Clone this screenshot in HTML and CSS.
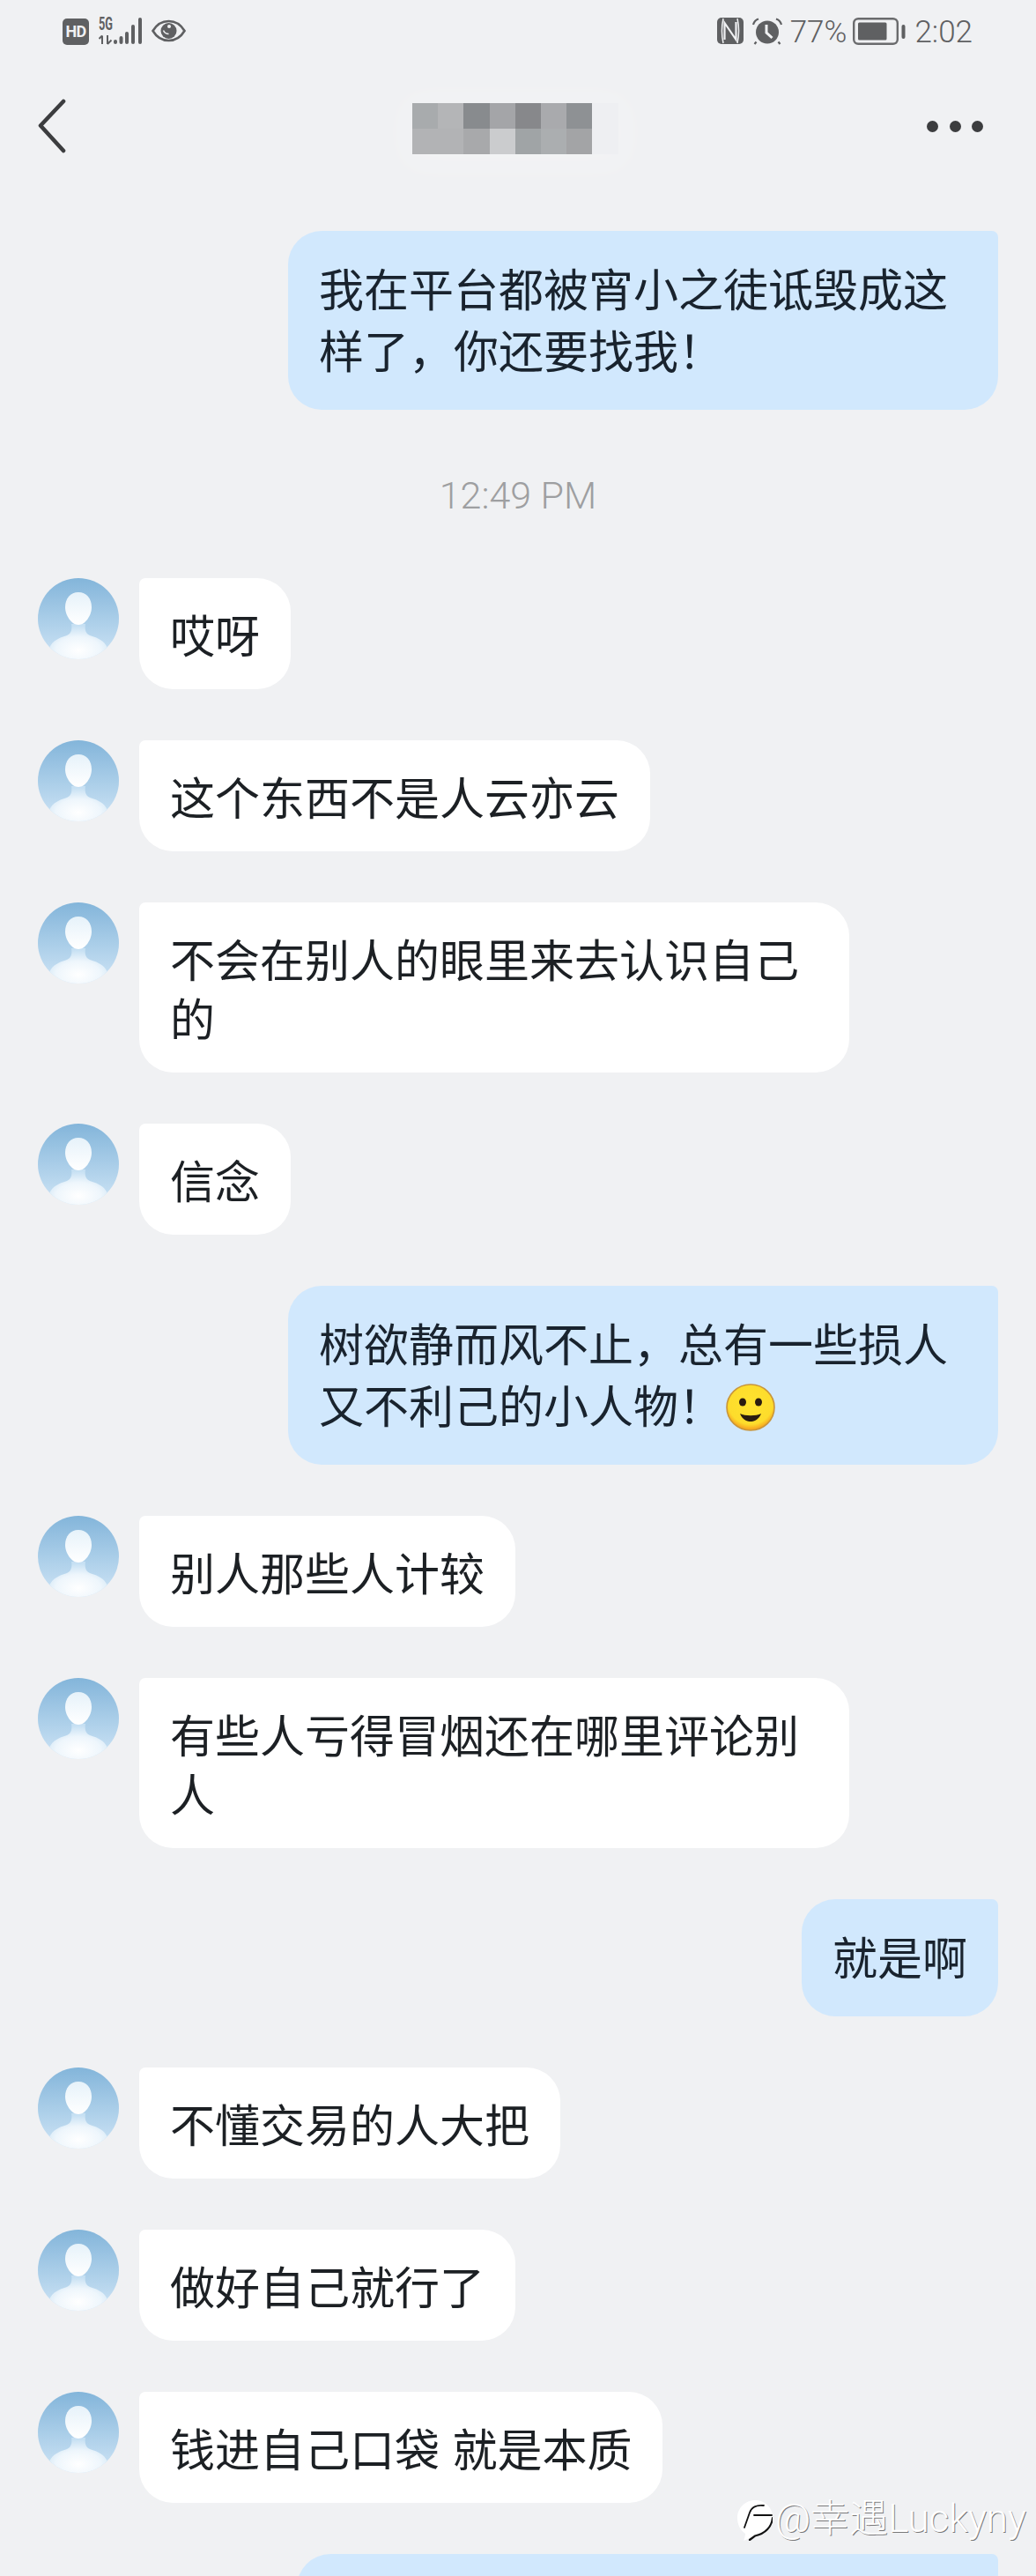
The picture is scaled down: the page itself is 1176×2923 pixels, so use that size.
FILE: index.html
```html
<!DOCTYPE html>
<html lang="zh-CN">
<head>
<meta charset="utf-8">
<title>Chat</title>
<link rel="stylesheet" href="styles.css">
</head>
<body>
<svg class="defs" width="0" height="0" aria-hidden="true">
  <defs>
    <linearGradient id="avBg" x1="0" y1="0" x2="0" y2="1">
      <stop offset="0" stop-color="#83b5da"/>
      <stop offset="1" stop-color="#cfe5f6"/>
    </linearGradient>
    <linearGradient id="avHead" x1="0" y1="0" x2="0" y2="1">
      <stop offset="0" stop-color="#e6f2fa"/>
      <stop offset="1" stop-color="#ffffff"/>
    </linearGradient>
    <radialGradient id="avBody" cx="0.5" cy="0.75" r="0.7">
      <stop offset="0" stop-color="#ffffff"/>
      <stop offset="0.55" stop-color="#eef6fc"/>
      <stop offset="1" stop-color="#c6e0f3"/>
    </radialGradient>
    <clipPath id="avClip"><circle cx="46" cy="46" r="46"/></clipPath>
    <symbol id="avatar" viewBox="0 0 92 92">
      <circle cx="46" cy="46" r="46" fill="url(#avBg)"/>
      <g clip-path="url(#avClip)">
        <path d="M13 79C17 71 23 68 33 65C38 63 39 58 38 52H54C53 58 54 63 59 65C69 68 75 71 79 79L79 92H13Z" fill="url(#avBody)"/>
        <path d="M46 16C37 16 31 23 31 33C31 42 38 53 46 53C54 53 61 42 61 33C61 23 55 16 46 16Z" fill="url(#avHead)"/>
      </g>
    </symbol>
    <radialGradient id="emo" cx="0.5" cy="0.4" r="0.65">
      <stop offset="0" stop-color="#ffe32e"/>
      <stop offset="0.72" stop-color="#fddc2c"/>
      <stop offset="0.88" stop-color="#f7a820"/>
      <stop offset="1" stop-color="#f2a21e"/>
    </radialGradient>
  </defs>
</svg>

<header class="status">
  <div class="status-group">
    <span class="hd">HD</span>
    <svg class="net" width="49" height="40" viewBox="0 -8 49 40">
      <text class="net-label" x="0" y="15" textLength="16" lengthAdjust="spacingAndGlyphs">5G</text>
      <g class="net-arrows">
        <path d="M4 31V21.500M0.500 25L4 21.500"/>
        <path d="M10 21V31M10 31L14.500 26.500"/>
      </g>
      <g class="net-bars">
        <rect x="17" y="26" width="4" height="5" rx="2"/>
        <rect x="23.500" y="22" width="4" height="9" rx="2"/>
        <rect x="30" y="17" width="4" height="14" rx="2"/>
        <rect x="37" y="9" width="4" height="22" rx="2"/>
        <rect x="45" y="1" width="4" height="30" rx="2"/>
      </g>
    </svg>
    <svg class="eye" width="39" height="26" viewBox="0 0 39 26">
      <path d="M1.500 13C6 5.500 12 2 19.500 2C27 2 33 5.500 37.500 13C33 20.500 27 24 19.500 24C12 24 6 20.500 1.500 13Z" fill="none" stroke="#5f6062" stroke-width="2.600"/>
      <circle cx="19.500" cy="13" r="9" fill="#5f6062"/>
      <path d="M13.500 12.500C14.500 15 16.500 16.500 19.500 16.500" fill="none" stroke="#f0f1f3" stroke-width="1.500"/>
      <circle cx="20" cy="8" r="2" fill="#f0f1f3"/>
    </svg>
  </div>
  <div class="status-group status-right">
    <svg class="nfc" width="30" height="30" viewBox="0 0 30 30">
      <rect x="0" y="0" width="30" height="30" rx="5" fill="#5f6062"/>
      <path d="M7 1C5 10 5 20 7 29M23 1C25 10 25 20 23 29" fill="none" stroke="#f0f1f3" stroke-width="1.500"/>
      <path d="M8.500 25V6L21.500 25V5" fill="none" stroke="#f0f1f3" stroke-width="2.200"/>
    </svg>
    <svg class="alarm" width="34" height="31" viewBox="0 0 34 31">
      <circle cx="17" cy="16.500" r="13" fill="#5f6062"/>
      <path d="M16 8V17L22.500 23" fill="none" stroke="#f0f1f3" stroke-width="3"/>
      <path d="M1 8C2 4.500 4 2.500 7 1.500M33 8C32 4.500 30 2.500 27 1.500M4.500 27.500L2.500 30M29.500 27.500L31.500 30" fill="none" stroke="#5f6062" stroke-width="2.200"/>
    </svg>
    <span class="status-text pct">77%</span>
    <svg class="battery" width="60" height="31" viewBox="0 0 60 31">
      <rect x="1.200" y="1.200" width="49.600" height="28.600" rx="5" fill="none" stroke="#6a6b6d" stroke-width="2.400"/>
      <rect x="6" y="5.500" width="32.500" height="20" rx="1.500" fill="#5f6062"/>
      <rect x="55.500" y="8" width="4" height="16" rx="2" fill="#5f6062"/>
    </svg>
    <span class="status-text clock">2:02</span>
  </div>
</header>

<nav class="nav">
  <svg class="back" width="32" height="62" viewBox="0 0 32 62">
    <path d="M29 3L3 30.500L29 59" fill="none" stroke="#3c3d3f" stroke-width="4.600" stroke-linecap="round" stroke-linejoin="round"/>
  </svg>
  <div class="mosaic" aria-hidden="true">
    <i class="c1"></i><i class="c2"></i><i class="c3"></i><i class="c4"></i><i class="c5"></i><i class="c6"></i><i class="c7"></i><i class="c8"></i>
    <i class="c9"></i><i class="c9"></i><i class="c10"></i><i class="c11"></i><i class="c12"></i><i class="c13"></i><i class="c14"></i><i class="c8"></i>
  </div>
  <div class="dots"><i></i><i></i><i></i></div>
</nav>

<main class="chat">
  <div class="msg out"><p class="bubble">我在平台都被宵小之徒诋毁成这样了，你还要找我！</p></div>
  <div class="time">12:49 PM</div>
  <div class="msg in"><svg class="avatar"><use href="#avatar"/></svg><p class="bubble">哎呀</p></div>
  <div class="msg in"><svg class="avatar"><use href="#avatar"/></svg><p class="bubble">这个东西不是人云亦云</p></div>
  <div class="msg in"><svg class="avatar"><use href="#avatar"/></svg><p class="bubble">不会在别人的眼里来去认识自己的</p></div>
  <div class="msg in"><svg class="avatar"><use href="#avatar"/></svg><p class="bubble">信念</p></div>
  <div class="msg out"><p class="bubble">树欲静而风不止，总有一些损人又不利己的小人物！<svg class="emoji" width="56" height="54" viewBox="0 0 56 54"><ellipse cx="28" cy="27" rx="27" ry="26" fill="url(#emo)" stroke="#c9963a" stroke-width="1.600"/><ellipse cx="19" cy="21" rx="4" ry="4.600" fill="#2a1c10"/><ellipse cx="37" cy="21" rx="4" ry="4.600" fill="#2a1c10"/><path d="M16 34C22 37 34 37 40 34C37 42 31 43 28 43C25 43 19 42 16 34Z" fill="#2a1c10"/></svg></p></div>
  <div class="msg in"><svg class="avatar"><use href="#avatar"/></svg><p class="bubble">别人那些人计较</p></div>
  <div class="msg in"><svg class="avatar"><use href="#avatar"/></svg><p class="bubble">有些人亏得冒烟还在哪里评论别人</p></div>
  <div class="msg out"><p class="bubble">就是啊</p></div>
  <div class="msg in"><svg class="avatar"><use href="#avatar"/></svg><p class="bubble">不懂交易的人大把</p></div>
  <div class="msg in"><svg class="avatar"><use href="#avatar"/></svg><p class="bubble">做好自己就行了</p></div>
  <div class="msg in"><svg class="avatar"><use href="#avatar"/></svg><p class="bubble">钱进自己口袋 就是本质</p></div>
  <div class="msg out"><p class="bubble bubble-cut"></p></div>
</main>

<div class="watermark">
  <svg class="wm-logo" width="40" height="46" viewBox="0 0 40 46">
    <path d="M20 0C31 0 40 8 40 19C40 31 30 40 18 41L7 46C8 43 9 41 9 38C3 34 0 27 0 20C0 9 9 0 20 0Z" fill="#fff"/>
    <path d="M30 6C22 5 16 8 14 14L8 31" fill="none" stroke="#111" stroke-width="1.800" stroke-linecap="round"/>
    <path d="M19 17H39" fill="none" stroke="#111" stroke-width="1.800" stroke-linecap="round"/>
    <path d="M40 20C39 30 32 38 20 40.500L14 45" fill="none" stroke="#111" stroke-width="2.200" stroke-linecap="round"/>
  </svg>
  <span class="wm-text">@幸遇Luckyny</span>
</div>
</body>
</html>
```
FILE: styles.css
```css
* { box-sizing: border-box; }

html, body {
  margin: 0;
  padding: 0;
}

body {
  position: relative;
  width: 1176px;
  height: 2923px;
  overflow: hidden;
  background: #f0f1f3;
  font-family: "Noto Sans CJK SC", "Noto Sans", sans-serif;
}

.defs { position: absolute; }

/* status bar */
.status {
  height: 70px;
  padding: 19px 72px 0 71px;
  display: flex;
  justify-content: space-between;
  align-items: flex-start;
  color: #5f6062;
}

.status-group {
  display: flex;
  align-items: flex-start;
}

.status-right { padding-top: 1px; }

.hd {
  width: 30px;
  height: 30px;
  margin-top: 2px;
  margin-right: 11px;
  border-radius: 5px;
  background: #5f6062;
  color: #f0f1f3;
  font: 700 18px/30px "Roboto", sans-serif;
  letter-spacing: -0.6px;
  text-align: center;
}

.net {
  margin-top: -8px;
  margin-right: 11px;
}

.net-label {
  font: 700 20px "Roboto", sans-serif;
  fill: #5f6062;
}

.net-arrows path {
  fill: none;
  stroke: #5f6062;
  stroke-width: 2;
}

.net-bars rect { fill: #5f6062; }

.eye { margin-top: 3px; }

.nfc { margin-right: 10px; }

.alarm { margin-right: 9px; }

.status-text {
  font: 300 35px/32px "Roboto", sans-serif;
  color: #5f6062;
  margin-top: 1px;
}

.pct { margin-right: 7px; }

.battery { margin-right: 10px; }

/* navigation */
.nav {
  height: 146px;
  padding: 0 60px 0 43px;
  display: grid;
  grid-template-columns: 425px 234px 1fr;
  align-items: center;
}

.mosaic {
  display: grid;
  grid-template-columns: repeat(8, 29.2px);
  grid-auto-rows: 29px;
  margin-top: 6px;
  box-shadow: 0 4px 40px 14px rgba(255, 255, 255, 0.18);
}

.c1 { background: #a8abad; }
.c2 { background: #b4b5b7; }
.c3 { background: #888b8e; }
.c4 { background: #a4a5a8; }
.c5 { background: #87888b; }
.c6 { background: #a9aaad; }
.c7 { background: #8e9194; }
.c8 { background: #eeeff2; }
.c9 { background: #b2b3b5; }
.c10 { background: #a8a9ab; }
.c11 { background: #cbccce; }
.c12 { background: #a0a4a6; }
.c13 { background: #abaeb0; }
.c14 { background: #a3a4a6; }

.dots {
  justify-self: end;
  display: flex;
  gap: 12.500px;
}

.dots i {
  width: 13px;
  height: 13px;
  border-radius: 50%;
  background: #3c3d3f;
}

/* chat */
.chat {
  padding: 46px 43px 0;
  display: flex;
  flex-direction: column;
  gap: 58px;
}

.msg {
  display: flex;
  align-items: flex-start;
  gap: 23px;
}

.msg.out { justify-content: flex-end; }

.avatar {
  width: 92px;
  height: 92px;
  flex: none;
}

.bubble {
  margin: 0;
  max-width: 806px;
  font-size: 51px;
  font-weight: 400;
  word-spacing: 3px;
}

.in .bubble {
  padding: 29.500px 35px;
  line-height: 67px;
  background: #fff;
  color: #1c2024;
  border-radius: 7px 38px 38px 38px;
}

.out .bubble {
  padding: 28.500px 35px 34.500px 35px;
  line-height: 70px;
  background: #d1e8fd;
  color: #19232e;
  border-radius: 38px 7px 38px 38px;
}

.bubble-cut {
  width: 796px;
  height: 133px;
}

.emoji {
  margin-left: 3px;
  vertical-align: -9px;
}

.time {
  height: 75px;
  padding-top: 2px;
  text-align: center;
  font: 300 43px/75px "Roboto", sans-serif;
  color: #9e9fa1;
}

/* watermark */
.watermark {
  position: absolute;
  left: 837px;
  top: 2833px;
  display: flex;
  align-items: flex-start;
  gap: 3px;
  color: #fff;
}

.wm-logo { margin-top: 4px; }

.wm-text {
  font-family: "Roboto", "Noto Sans CJK SC", sans-serif;
  font-weight: 300;
  font-size: 44px;
  line-height: 50px;
  white-space: nowrap;
  text-shadow: 1px 1px 0 rgba(0, 0, 0, 0.5);
}
```
